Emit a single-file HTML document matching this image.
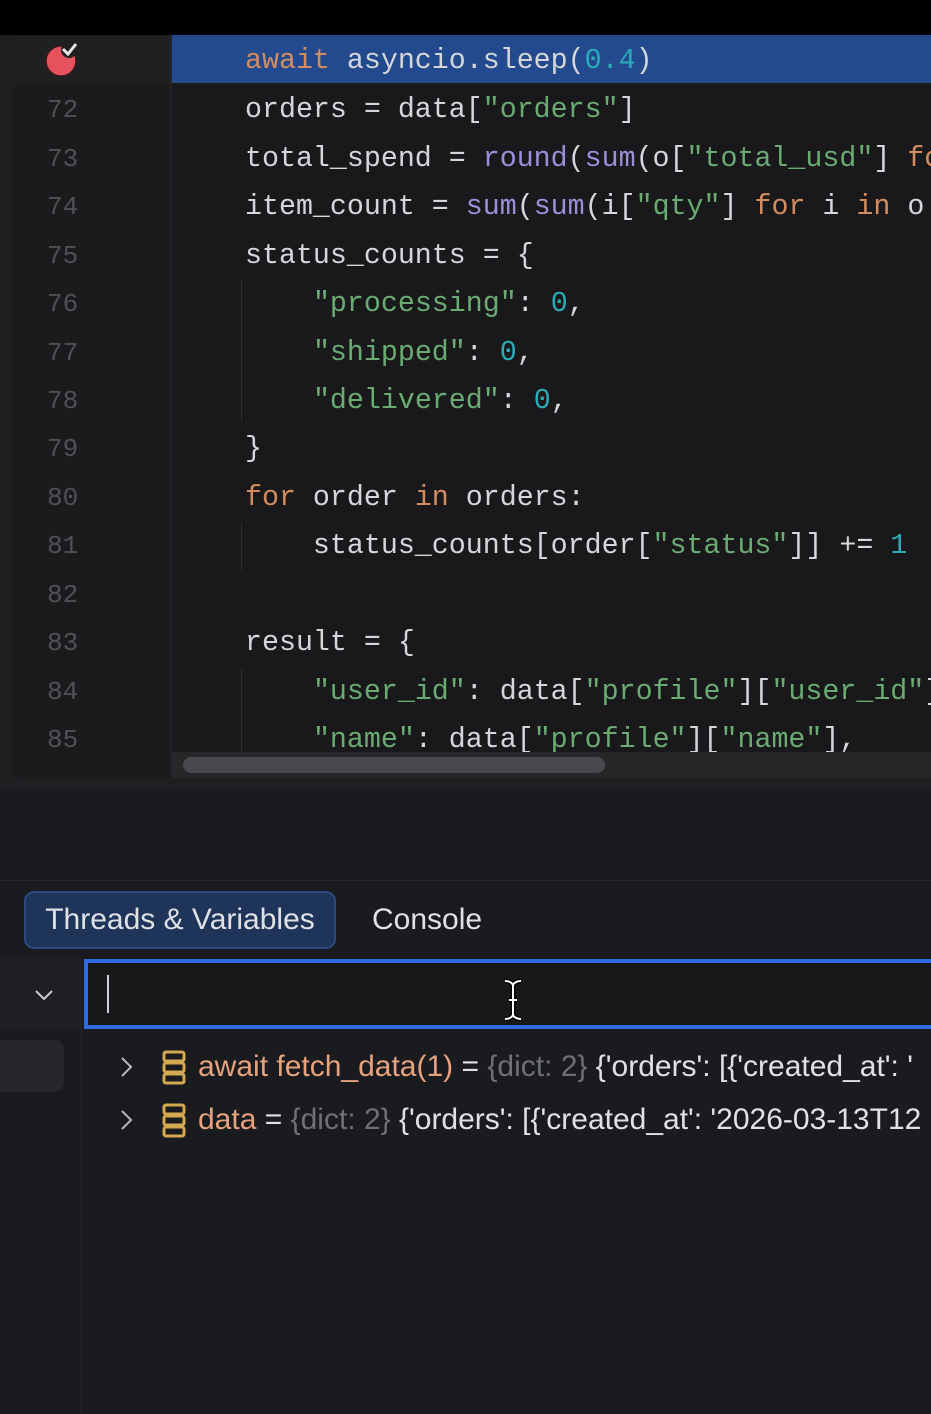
<!DOCTYPE html>
<html><head><meta charset="utf-8"><style>
*{margin:0;padding:0;box-sizing:border-box}
body{width:931px;height:1414px;background:#1a1b1e;overflow:hidden;position:relative;font-family:"Liberation Sans",sans-serif}
.top{position:absolute;left:0;top:0;width:931px;height:35px;background:#000}
.edge{position:absolute;left:0;top:35px;width:14px;height:743px;background:#1d1e20}
.gut{position:absolute;left:14px;top:35px;width:156px;height:743px;background:#1b1b1d;border-bottom-left-radius:14px}
.gsep{position:absolute;left:170px;top:35px;width:2px;height:743px;background:#232427}
.code{position:absolute;left:172px;top:35px;width:759px;height:717px;background:#19191b;overflow:hidden}
.hl{position:absolute;left:172px;top:35px;width:759px;height:48px;background:#234a8e}
.ghl{position:absolute;left:14px;top:35px;width:156px;height:48px;background:#1f2022}
.ln{position:absolute;left:47px;width:40px;font-family:"Liberation Mono",monospace;font-size:26px;color:#4f5155;line-height:48px}
.l{position:absolute;left:245px;font-family:"Liberation Mono",monospace;font-size:28.3px;color:#d5d6da;line-height:48px;white-space:pre}
.k{color:#d38c5f}.s{color:#6aab73}.n{color:#2aacb8}.f{color:#9c8fd9}
.guide{position:absolute;left:241px;width:1px;background:#2e2f33}
.sb{position:absolute;left:172px;top:752px;width:759px;height:26px;background:#262729}
.th{position:absolute;left:183px;top:757px;width:422px;height:16px;border-radius:8px;background:#48494c}
.sep{position:absolute;left:0;top:778px;width:931px;height:12px;background:#1e1f21}
.hline{position:absolute;left:0;top:880px;width:931px;height:1px;background:#26272a}
.tab1{position:absolute;left:24px;top:891px;width:312px;height:58px;background:#1f3459;border:2px solid #2c4a80;border-radius:10px;color:#dfe1e5;font-size:30px;line-height:54px;text-align:center}
.tab2{position:absolute;left:372px;top:891px;color:#dfe1e5;font-size:30px;line-height:58px}
.lcol{position:absolute;left:0;top:958px;width:82px;height:456px;background:#1a1b1e;border-right:2px solid #1e1f22}
.lcol1{position:absolute;left:0;top:958px;width:82px;height:72px;background:#1e1f22}
.lpill{position:absolute;left:-10px;top:1040px;width:74px;height:52px;border-radius:10px;background:#26272b}
.search{position:absolute;left:84px;top:959px;width:860px;height:70px;border:4px solid #2f6ae0;background:#17181a}
.caret{position:absolute;left:107px;top:975px;width:2px;height:38px;background:#cfd1d6}
.row{position:absolute;left:198px;font-size:30px;color:#dfe1e5;white-space:pre;line-height:40px}
.o{color:#e6a27e}.g{color:#6e7076}
</style></head><body>
<div class="top"></div>
<div class="edge"></div><div class="gut"></div><div class="ghl"></div><div class="gsep"></div>
<div class="code"></div><div class="hl"></div>
<svg style="position:absolute;left:44px;top:40px" width="36" height="38" viewBox="0 0 36 38"><circle cx="17" cy="21" r="15" fill="#e5525e" stroke="#3a1a1c" stroke-width="1.5"/><circle cx="25" cy="10" r="8" fill="#1f2022"/><path d="M19 9l5 5 8-10" stroke="#e8e8ea" stroke-width="3" fill="none"/></svg>
<div class="ln" style="top:86px">72</div><div class="ln" style="top:135px">73</div><div class="ln" style="top:183px">74</div><div class="ln" style="top:232px">75</div><div class="ln" style="top:280px">76</div><div class="ln" style="top:329px">77</div><div class="ln" style="top:377px">78</div><div class="ln" style="top:425px">79</div><div class="ln" style="top:474px">80</div><div class="ln" style="top:522px">81</div><div class="ln" style="top:571px">82</div><div class="ln" style="top:619px">83</div><div class="ln" style="top:668px">84</div><div class="ln" style="top:716px">85</div>
<div class="guide" style="top:280px;height:142px"></div>
<div class="guide" style="top:522px;height:48px"></div>
<div class="guide" style="top:668px;height:84px"></div>
<div class="l" style="top:37px"><span class="k">await</span> asyncio.sleep(<span class="n">0.4</span>)</div>
<div class="l" style="top:86px">orders = data[<span class="s">"orders"</span>]</div>
<div class="l" style="top:135px">total_spend = <span class="f">round</span>(<span class="f">sum</span>(o[<span class="s">"total_usd"</span>] <span class="k">for</span></div>
<div class="l" style="top:183px">item_count = <span class="f">sum</span>(<span class="f">sum</span>(i[<span class="s">"qty"</span>] <span class="k">for</span> i <span class="k">in</span> o</div>
<div class="l" style="top:232px">status_counts = {</div>
<div class="l" style="top:280px">    <span class="s">"processing"</span>: <span class="n">0</span>,</div>
<div class="l" style="top:329px">    <span class="s">"shipped"</span>: <span class="n">0</span>,</div>
<div class="l" style="top:377px">    <span class="s">"delivered"</span>: <span class="n">0</span>,</div>
<div class="l" style="top:425px">}</div>
<div class="l" style="top:474px"><span class="k">for</span> order <span class="k">in</span> orders:</div>
<div class="l" style="top:522px">    status_counts[order[<span class="s">"status"</span>]] += <span class="n">1</span></div>
<div class="l" style="top:619px">result = {</div>
<div class="l" style="top:668px">    <span class="s">"user_id"</span>: data[<span class="s">"profile"</span>][<span class="s">"user_id"</span>]</div>
<div class="l" style="top:716px;height:36px;overflow:hidden">    <span class="s">"name"</span>: data[<span class="s">"profile"</span>][<span class="s">"name"</span>],</div>
<div class="sb"></div><div class="th"></div>
<div class="sep"></div>
<div class="hline"></div>
<div class="tab1">Threads &amp; Variables</div>
<div class="tab2">Console</div>
<div class="lcol"></div><div class="lcol1"></div><div class="lpill"></div>
<svg style="position:absolute;left:34px;top:988px" width="20" height="14" viewBox="0 0 20 14"><path d="M2 3l8 8 8-8" stroke="#c8cace" stroke-width="2" fill="none"/></svg>
<div class="search"></div><div class="caret"></div>
<svg style="position:absolute;left:500px;top:978px" width="26" height="44" viewBox="0 0 26 44"><path d="M5 3c4 0 8 2 8 5 0-3 4-5 8-5M13 8v28M5 41c4 0 8-2 8-5 0 3 4 5 8 5M9 22h8" stroke="#000" stroke-width="5" fill="none"/><path d="M5 3c4 0 8 2 8 5 0-3 4-5 8-5M13 8v28M5 41c4 0 8-2 8-5 0 3 4 5 8 5M9 22h8" stroke="#fff" stroke-width="2" fill="none"/></svg>
<svg style="position:absolute;left:118px;top:1055px" width="16" height="24" viewBox="0 0 16 24"><path d="M4 3l9 9-9 9" stroke="#b8babe" stroke-width="2" fill="none"/></svg>
<svg style="position:absolute;left:118px;top:1108px" width="16" height="24" viewBox="0 0 16 24"><path d="M4 3l9 9-9 9" stroke="#b8babe" stroke-width="2" fill="none"/></svg>
<svg style="position:absolute;left:161px;top:1050px" width="26" height="36" viewBox="0 0 26 36"><g fill="none" stroke="#d4a94f" stroke-width="3"><rect x="3" y="2" width="20" height="9" rx="2"/><rect x="3" y="13" width="20" height="9" rx="2"/><rect x="3" y="24" width="20" height="9" rx="2"/></g></svg>
<svg style="position:absolute;left:161px;top:1103px" width="26" height="36" viewBox="0 0 26 36"><g fill="none" stroke="#d4a94f" stroke-width="3"><rect x="3" y="2" width="20" height="9" rx="2"/><rect x="3" y="13" width="20" height="9" rx="2"/><rect x="3" y="24" width="20" height="9" rx="2"/></g></svg>
<div class="row" style="top:1047px"><span class="o">await fetch_data(1)</span> = <span class="g">{dict: 2}</span> {'orders': [{'created_at': '</div>
<div class="row" style="top:1100px"><span class="o">data</span> = <span class="g">{dict: 2}</span> {'orders': [{'created_at': '2026-03-13T12</div>
</body></html>
